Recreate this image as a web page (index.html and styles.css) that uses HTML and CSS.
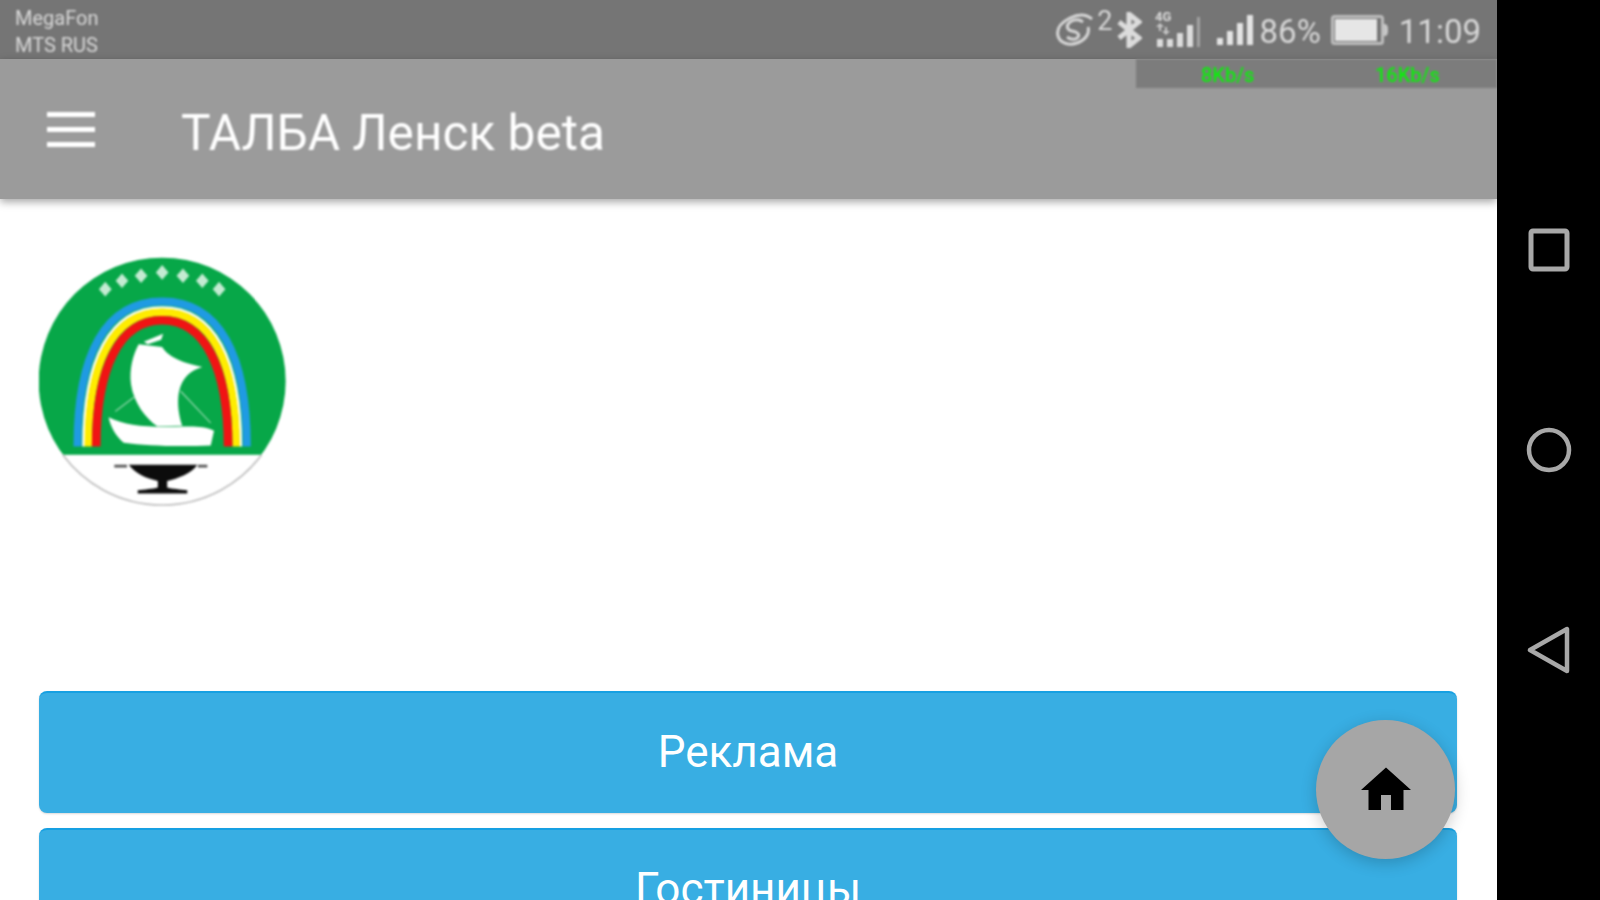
FILE: index.html
```html
<!DOCTYPE html>
<html lang="ru">
<head>
  <meta charset="UTF-8" />
  <title>ТАЛБА Ленск beta</title>
  <link rel="stylesheet" href="styles.css">
</head>
<body>
  <div class="screen">
    <!-- status bar -->
    <div class="statusbar">
      <div class="carriers">
        <div>MegaFon</div>
        <div>MTS RUS</div>
      </div>
      <div class="status-right">
        <div class="sync">
          <svg width="38" height="36" viewBox="0 0 38 36" fill="none" stroke="#d6d6d6" stroke-width="3">
            <path d="M36 7C30 2 22 2 14 6 6 10 0 16 2 24c2 7 11 10 19 7 8-3 13-9 11-16"/>
            <path d="M27 10c-4-3-10-3-14 1-3 3-2 7 3 8 5 1 8 3 6 6-2 3-7 3-11 0"/>
          </svg>
          <span class="sup">2</span>
        </div>
        <svg class="bt" width="26" height="36" viewBox="0 0 26 36" fill="none" stroke="#dcdcdc" stroke-width="5">
          <path d="M3 10l20 16-10 8V2l10 8L3 26"/>
        </svg>
        <svg class="sig4g" width="48" height="38" viewBox="0 0 48 38" fill="#dcdcdc">
          <text x="0" y="10" class="tiny">4G</text>
          <path d="M5 12l4 4H6v4H4v-4H1zM11 24l-4-4h3v-4h2v4h3z" opacity=".8"/>
          <rect x="2" y="28" width="6" height="8"/>
          <rect x="12" y="28" width="6" height="8"/>
          <rect x="22" y="22" width="6" height="14"/>
          <rect x="32" y="14" width="6" height="22"/>
          <rect x="42" y="6" width="3" height="30" opacity=".45"/>
        </svg>
        <svg class="sig" width="37" height="34" viewBox="0 0 37 34" fill="#e4e4e4">
          <rect x="0" y="25" width="6" height="7"/>
          <rect x="10" y="18" width="6" height="14"/>
          <rect x="20" y="10" width="6" height="22"/>
          <rect x="30" y="2" width="6" height="30"/>
        </svg>
        <span class="pct">86%</span>
        <svg class="batt" width="57" height="32" viewBox="0 0 57 32">
          <rect x="1.5" y="2.5" width="50" height="27" rx="2" fill="none" stroke="#bdbdbd" stroke-width="3"/>
          <rect x="4" y="5" width="42" height="22" fill="#e6e6e6"/>
          <path d="M53 10h1c2 0 3 2 3 6s-1 6-3 6h-1z" fill="#c8c8c8"/>
        </svg>
        <span class="time">11:09</span>
      </div>
    </div>

    <!-- app bar -->
    <div class="appbar">
      <svg class="menu" width="48" height="36" viewBox="0 0 48 36" fill="#fff">
        <rect x="0" y="0" width="48" height="5"/>
        <rect x="0" y="15" width="48" height="5"/>
        <rect x="0" y="30" width="48" height="5"/>
      </svg>
      <span class="title">ТАЛБА Ленск beta</span>
      <div class="speed">
        <span class="down">8Kb/s</span>
        <span class="up">16Kb/s</span>
      </div>
    </div>

    <!-- content -->
    <div class="content">
      <svg class="logo" width="247" height="251" viewBox="57 39 738 750">
        <defs>
          <clipPath id="disc"><circle cx="425" cy="410" r="369"/></clipPath>
        </defs>
        <circle cx="425" cy="410" r="369" fill="#fff"/>
        <g clip-path="url(#disc)">
          <rect x="50" y="30" width="760" height="600" fill="#07a748"/>
        </g>
        <path d="M128 630A369 369 0 0 0 722 630" fill="none" stroke="#bdbdbd" stroke-width="5"/>
        <g fill="#c4ebd2">
          <path d="M255 113l19 22-19 22-19-22z"/>
          <path d="M305 88l19 22-19 22-19-22z"/>
          <path d="M362 73l19 22-19 22-19-22z"/>
          <path d="M425 63l19 22-19 22-19-22z"/>
          <path d="M487 73l19 22-19 22-19-22z"/>
          <path d="M545 88l19 22-19 22-19-22z"/>
          <path d="M595 113l19 22-19 22-19-22z"/>
        </g>
        <g fill="none">
          <path d="M172 605C172 330 255 172 425 172S678 330 678 605" stroke="#1f9be2" stroke-width="24"/>
          <path d="M190 605C190 345 268 190 425 190S660 345 660 605" stroke="#fff" stroke-width="8"/>
          <path d="M204 605C204 355 278 204 425 204S646 355 646 605" stroke="#ffec00" stroke-width="22"/>
          <path d="M228 605C228 375 295 228 425 228S622 375 622 605" stroke="#f01414" stroke-width="26"/>
        </g>
        <path d="M370 292l58-24-6 18-40 14zM355 300l70 8c15 25 50 45 120 60-35 10-60 30-70 75-6 35 0 70 10 100l-75 2c-35-25-70-70-78-125-6-45 6-90 23-120z" fill="#fff"/>
        <path d="M265 518c50 25 110 30 200 28 40 0 80-5 115 12l-10 44c-90 4-190 2-260-8-25-20-40-50-45-76z" fill="#fff"/>
        <path d="M285 500l60-45M480 440l90 95" stroke="#b9e6c8" stroke-width="3" fill="none"/>
        <path d="M325 660h205c-15 25-60 42-90 48v20c15 4 40 6 60 8v10H352v-10c20-2 45-4 60-8v-20c-35-6-70-25-87-48z" fill="#0c0c0c"/>
        <path d="M282 660h38v8h-38zM532 660h28v8h-28z" fill="#555"/>
      </svg>
      <div class="btn">Реклама</div>
      <div class="btn">Гостиницы</div>
    </div>

    <!-- floating home button -->
    <div class="fab">
      <svg width="60" height="60" viewBox="0 0 24 24" fill="#000">
        <path d="M10 20v-6h4v6h5v-8h3L12 3 2 12h3v8z"/>
      </svg>
    </div>
  </div>

  <!-- android nav -->
  <div class="nav">
    <div class="nav-item">
      <svg width="42" height="44" viewBox="0 0 42 44" fill="none" stroke="#a8a8a8" stroke-width="5">
        <rect x="3" y="3" width="36" height="38" rx="2"/>
      </svg>
    </div>
    <div class="nav-item">
      <svg width="46" height="46" viewBox="0 0 46 46" fill="none" stroke="#a8a8a8" stroke-width="4.5">
        <circle cx="23" cy="23" r="20"/>
      </svg>
    </div>
    <div class="nav-item">
      <svg width="44" height="48" viewBox="0 0 44 48" fill="none" stroke="#a8a8a8" stroke-width="4.5" stroke-linejoin="round">
        <path d="M40 3v42L3 24z"/>
      </svg>
    </div>
  </div>
</body>
</html>
```

FILE: styles.css
```css
html, body {
  margin: 0;
  height: 900px;
  overflow: hidden;
}

body {
  display: flex;
  background-color: #000;
  font-family: Roboto, "Liberation Sans", sans-serif;
}

.screen {
  position: relative;
  width: 1497px;
  height: 900px;
  background-color: #fff;
  overflow: hidden;
}

/* status bar */
.statusbar {
  height: 59px;
  background-color: #757575;
  display: flex;
  justify-content: space-between;
  align-items: center;
  padding: 0 16px 0 15px;
  color: #d8d8d8;
}

.carriers {
  font-size: 20px;
  line-height: 27px;
  margin-top: 4px;
  filter: blur(0.8px);
}

.status-right {
  display: flex;
  align-items: center;
  filter: blur(0.8px);
}

.sync {
  display: flex;
  align-items: flex-start;
  gap: 3px;
  margin-right: 3px;
}

.sup {
  font-size: 27px;
  line-height: 25px;
  margin-top: -3px;
}

.bt {
  margin-right: 13px;
}

.tiny {
  font-size: 13px;
  font-weight: 700;
}

.sig4g {
  margin-right: 14px;
}

.sig {
  margin-right: 6px;
}

.pct {
  font-size: 33px;
  margin-right: 10px;
  margin-top: 3px;
}

.batt {
  margin-right: 11px;
}

.time {
  font-size: 33px;
  margin-top: 3px;
}

/* app bar */
.appbar {
  position: relative;
  height: 140px;
  background-color: #9b9b9b;
  display: flex;
  align-items: center;
  padding-left: 47px;
  box-shadow: 0 3px 8px rgba(0, 0, 0, 0.35);
}

.menu {
  margin-top: 2px;
  margin-right: 86px;
  filter: blur(0.8px);
}

.title {
  font-size: 49.6px;
  color: #fff;
  margin-top: 8px;
  filter: blur(0.8px);
}

.speed {
  position: absolute;
  top: 0;
  right: 0;
  width: 361px;
  height: 29px;
  background-color: #7c7c7c;
  color: #0cee0c;
  font-size: 20px;
  font-weight: 500;
  filter: blur(0.8px);
}

.down {
  position: absolute;
  left: 65px;
  top: 4px;
}

.up {
  position: absolute;
  left: 239px;
  top: 4px;
}

/* content */
.content {
  padding: 58px 40px 0 39px;
}

.logo {
  display: block;
  margin-bottom: 183px;
  filter: blur(1px);
}

.btn {
  height: 122px;
  margin-bottom: 15px;
  padding-bottom: 2px;
  background-color: #38aee3;
  border-top: 2px solid #16a0e2;
  box-sizing: border-box;
  border-radius: 8px;
  color: #fff;
  font-size: 44px;
  display: flex;
  align-items: center;
  justify-content: center;
  box-shadow: 0 1px 2px rgba(0, 0, 0, 0.15);
}

.fab {
  position: absolute;
  left: 1316px;
  top: 720px;
  width: 139px;
  height: 139px;
  border-radius: 50%;
  background-color: #a6a6a6;
  display: flex;
  align-items: center;
  justify-content: center;
  box-shadow: 0 4px 16px rgba(0, 0, 0, 0.2);
}

/* android nav */
.nav {
  width: 103px;
  height: 900px;
  display: flex;
  flex-direction: column;
  justify-content: center;
  filter: blur(0.6px);
}

.nav-item {
  height: 200px;
  display: flex;
  align-items: center;
  justify-content: center;
}
```
